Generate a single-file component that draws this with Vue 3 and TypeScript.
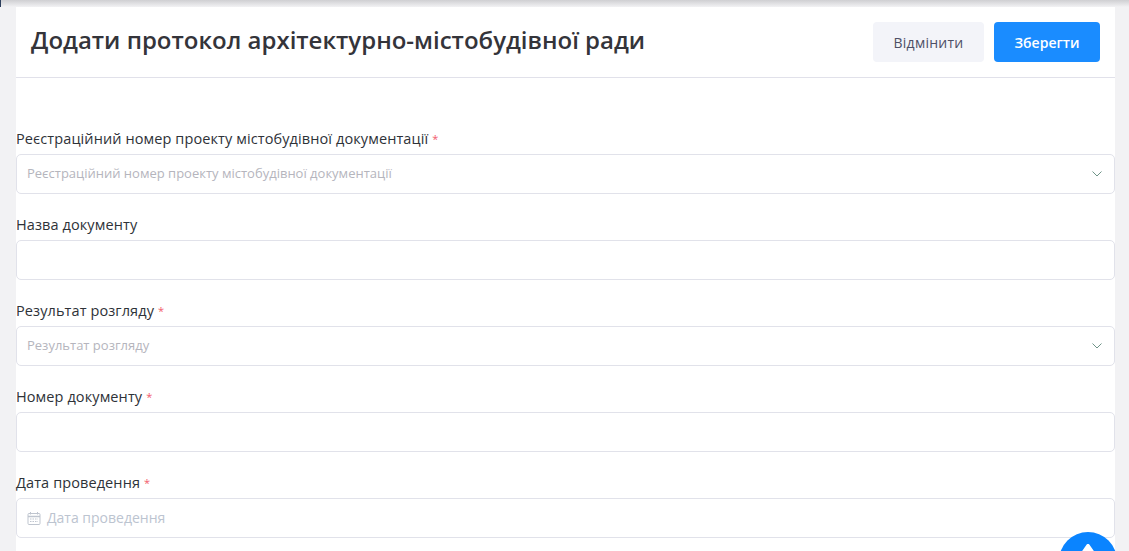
<script setup lang="ts">
interface Field {
  label: string
  required: boolean
  kind: 'select' | 'input' | 'date'
  placeholder?: string
}
const fields: Field[] = [
  { label: 'Реєстраційний номер проекту містобудівної документації', required: true, kind: 'select', placeholder: 'Реєстраційний номер проекту містобудівної документації' },
  { label: 'Назва документу', required: false, kind: 'input' },
  { label: 'Результат розгляду', required: true, kind: 'select', placeholder: 'Результат розгляду' },
  { label: 'Номер документу', required: true, kind: 'input' },
  { label: 'Дата проведення', required: true, kind: 'date', placeholder: 'Дата проведення' },
]
</script>

<template>
  <div class="page">
    <div class="topbar"><span class="blip"></span></div>
    <main class="card">
      <header class="head">
        <h1>Додати протокол архітектурно-містобудівної ради</h1>
        <div class="actions">
          <button class="btn ghost" type="button">Відмінити</button>
          <button class="btn primary" type="button">Зберегти</button>
        </div>
      </header>
      <form class="form">
        <div v-for="f in fields" :key="f.label" class="row">
          <label class="label">{{ f.label }}<span v-if="f.required" class="req">*</span></label>
          <div class="control" :class="f.kind">
            <svg v-if="f.kind === 'date'" class="cal" width="14" height="14" viewBox="0 0 14 14" fill="none" stroke="#bfc5cf">
              <rect x="1" y="2.500" width="12" height="11" rx="1" />
              <path d="M1 5.500h12" stroke-width="1.500" />
              <path d="M3.500 1v2.500M10.500 1v2.500" />
              <path d="M3 8h8M3 10.500h8" stroke-dasharray="1.500 1" />
            </svg>
            <span v-if="f.placeholder" class="ph">{{ f.placeholder }}</span>
            <svg v-if="f.kind === 'select'" class="chev" width="10" height="6" viewBox="0 0 10 6" fill="none" stroke="#6f9488" stroke-width="1">
              <path d="M.5.500 5 5 9.500.500" />
            </svg>
          </div>
        </div>
      </form>
    </main>
    <button class="fab" type="button" aria-label="Вгору">
      <svg width="30" height="20" viewBox="0 0 30 20"><path d="M13.500.700a2 2 0 0 1 3 0L25 13a2 2 0 0 1-1.500 3.400H6.500A2 2 0 0 1 5 13Z" fill="#fff" /></svg>
    </button>
  </div>
</template>

<style>
html, body { margin: 0; height: 100%; overflow: hidden; background: #f2f2f4; }
</style>

<style scoped>
.page {
  position: relative;
  height: 551px;
  overflow: hidden;
  background: #f2f2f4;
  font-family: "Open Sans", "Noto Sans", sans-serif;
}
.topbar {
  position: relative;
  height: 7px;
  box-sizing: border-box;
  background: linear-gradient(#cfcfd2, #f2f2f4);
}
.blip {
  position: absolute;
  left: 0;
  top: 0;
  width: 1px;
  height: 7px;
  background: #2c3e5c;
}
.card {
  margin: 0 14px 0 16px;
  background: #fff;
}
.head {
  display: flex;
  align-items: center;
  justify-content: space-between;
  box-sizing: border-box;
  height: 71px;
  padding: 0 15px;
  border-bottom: 1px solid #e1e1ea;
}
h1 {
  margin: 0 0 4px;
  font-size: 24px;
  line-height: 32px;
  font-weight: 600;
  color: #34343a;
}
.actions { display: flex; gap: 10px; }
.btn {
  height: 40px;
  border: 0;
  border-radius: 4px;
  font-family: inherit;
  font-size: 14px;
  padding: 0;
}
.ghost { width: 111px; background: #f3f4f9; color: #4d4f66; font-weight: 500; letter-spacing: 0.25px; }
.primary { width: 106px; background: #1a8cff; color: #fff; font-weight: 600; }
.form {
  padding-top: 54px;
}
.row {
  height: 86px;
}
.label {
  display: block;
  height: 22px;
  line-height: 14px;
  font-size: 14.500px;
  font-weight: 500;
  letter-spacing: 0.1px;
  color: #2e3238;
  white-space: nowrap;
}
.req { color: #f25c6c; margin-left: 4px; font-size: 11px; vertical-align: 1px; }
.control {
  display: flex;
  align-items: center;
  box-sizing: border-box;
  height: 40px;
  padding: 0 10px;
  border: 1px solid #e1e2ea;
  border-radius: 5px;
  background: #fff;
}
.ph { font-size: 13px; line-height: 16px; margin-top: -2px; color: #b5b5bd; }
.select { justify-content: space-between; padding-right: 12px; }
.date .ph { font-size: 14px; color: #bcc4d0; margin-left: 6px; margin-top: 0; }
.cal { flex: none; }
.fab {
  position: absolute;
  left: 1059px;
  top: 532px;
  width: 58px;
  height: 58px;
  padding: 0;
  border: 0;
  border-radius: 50%;
  background: #0a84ff;
  display: flex;
  justify-content: center;
  align-items: flex-start;
}
.fab svg { margin-top: 12px; }
</style>
